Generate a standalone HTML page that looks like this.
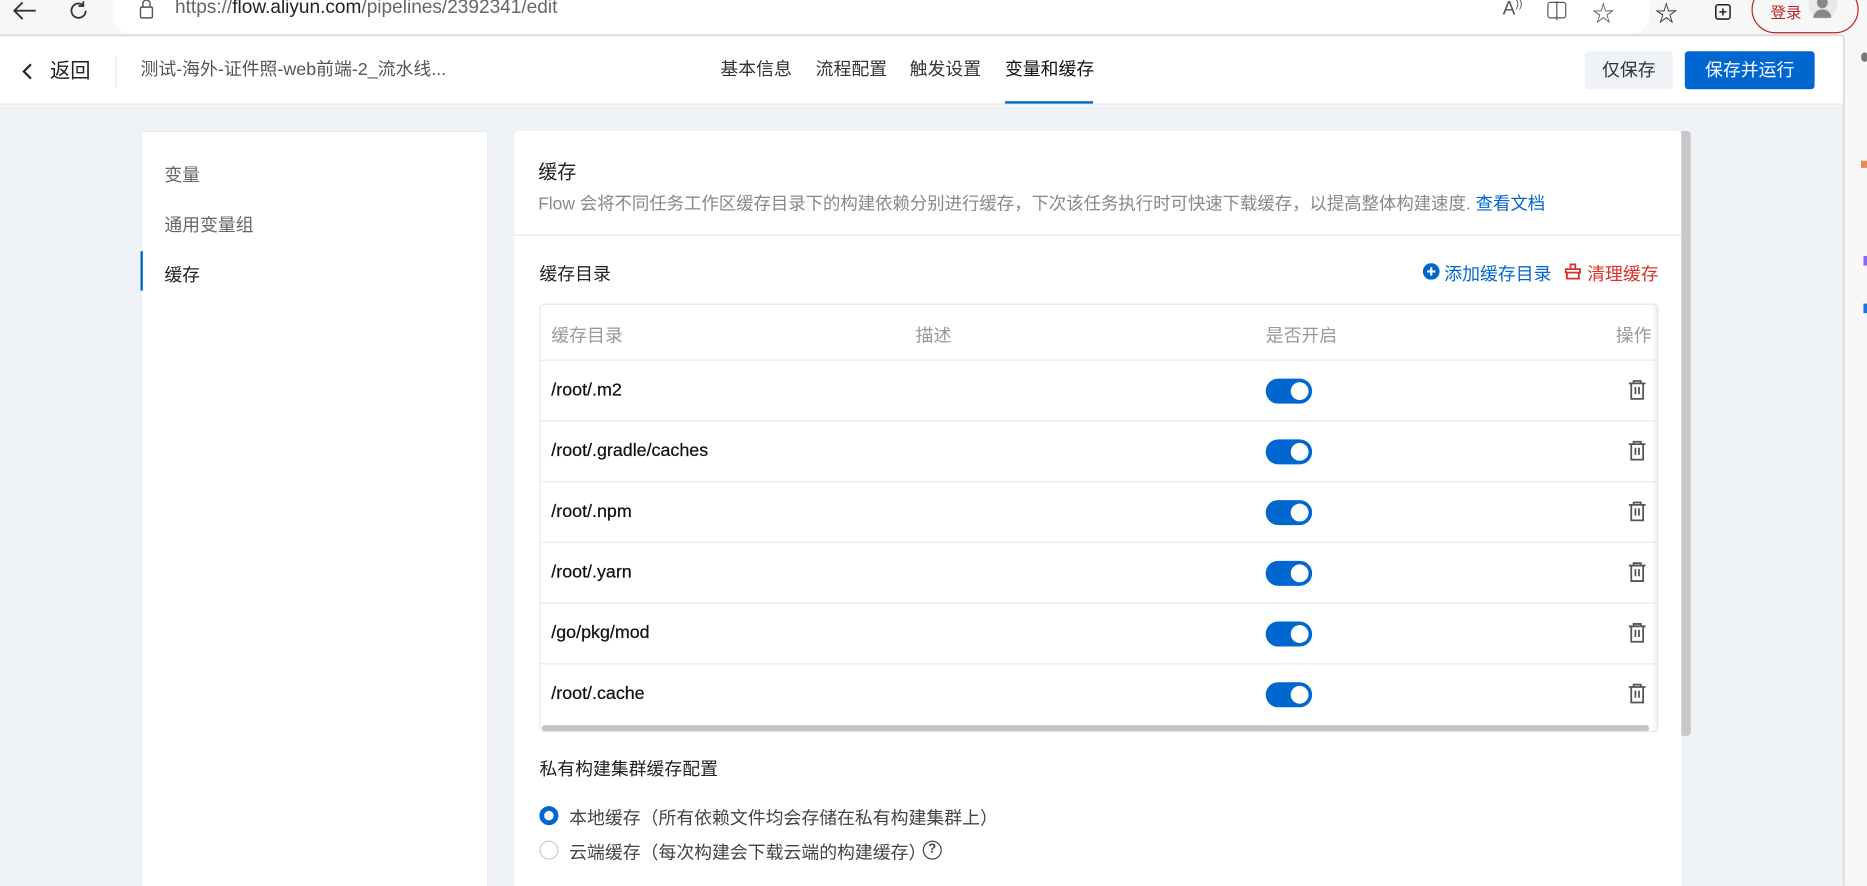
<!DOCTYPE html>
<html><head><meta charset="utf-8">
<style>
*{box-sizing:border-box;margin:0;padding:0}
html,body{width:1867px;height:886px;overflow:hidden;background:#f7f7f7}
#w{width:1568px;height:744px;transform:scale(1.19069);transform-origin:0 0;position:relative;font-family:"Liberation Sans","Noto Sans CJK SC",sans-serif;color:#333}
.a{position:absolute}
.t{white-space:nowrap}
.row{position:absolute;left:0;right:0;height:51px;border-top:1px solid #e8e8e8}
.row .p{position:absolute;left:9px;top:16px;font-size:15px;color:#111;-webkit-text-stroke:0.2px #111}
.tg{position:absolute;left:609px;top:15px;width:39px;height:21px;border-radius:11px;background:#0067d1}
.tg:after{content:"";position:absolute;right:3px;top:3px;width:15px;height:15px;border-radius:50%;background:#fff}
.tr{position:absolute;left:913px;top:16px}
</style></head><body><div id="w">
<div class="a" style="left:0;top:0;width:1548px;height:30px;background:#f7f7f7;border-bottom:1px solid #d0d0d0"></div>
<svg class="a" style="left:10px;top:0" width="22" height="18" viewBox="0 0 22 18"><path d="M20 9H3M9 2L2 9l7 7" stroke="#333" stroke-width="1.6" fill="none"/></svg>
<svg class="a" style="left:57px;top:0" width="18" height="18" viewBox="0 0 18 18"><path d="M15 9a6 6 0 1 1-2-4.5M13 1v4h-4" stroke="#333" stroke-width="1.5" fill="none"/></svg>
<div class="a" style="left:95px;top:-12px;width:1290px;height:40px;background:#fff;border-radius:14px"></div>
<svg class="a" style="left:116px;top:0" width="14" height="16" viewBox="0 0 14 16"><rect x="2" y="6" width="10" height="9" rx="1" stroke="#555" fill="none" stroke-width="1.2"/><path d="M4 6V3a3 3 0 0 1 6 0v3" stroke="#555" fill="none" stroke-width="1.2"/></svg>
<div class="a t" style="left:147px;top:-2px;font-size:16px;color:#666">https://<span style="color:#222">flow.aliyun.com</span>/pipelines/2392341/edit</div>
<div class="a t" style="left:1262px;top:-2px;font-size:16px;color:#555">A<sup style="font-size:9px">))</sup></div>
<svg class="a" style="left:1299px;top:1px" width="18" height="16"><rect x="1" y="1" width="15" height="13" rx="2" stroke="#555" fill="none"/><path d="M8.5 0v16" stroke="#555"/></svg>
<div class="a t" style="left:1337px;top:-3px;font-size:19px;color:#555">☆</div>
<div class="a t" style="left:1390px;top:-3px;font-size:19px;color:#222">☆</div>
<svg class="a" style="left:1437px;top:1px" width="18" height="16"><rect x="4" y="3" width="12" height="12" rx="2" stroke="#222" fill="none" stroke-width="1.3"/><path d="M10 6v6M7 9h6" stroke="#222" stroke-width="1.3"/></svg>
<div class="a" style="left:1471px;top:-12px;width:90px;height:40px;border:1px solid #b22;border-radius:20px"></div>
<div class="a t" style="left:1487px;top:0px;font-size:13px;color:#b22">登录</div>
<div class="a" style="left:1519px;top:-8px;width:24px;height:24px;border-radius:50%;background:#e8e8e8"></div>
<div class="a" style="left:1526px;top:-3px;width:9px;height:10px;border-radius:50%;background:#888"></div>
<div class="a" style="left:1523px;top:8px;width:15px;height:7px;border-radius:7px 7px 0 0;background:#888"></div>
<div class="a" style="left:1548px;top:30px;width:1px;height:714px;background:#ccc"></div>
<div class="a" style="left:1563px;top:44px;width:6px;height:8px;border-radius:50%;background:#777"></div>
<div class="a" style="left:1563px;top:135px;width:5px;height:6px;background:#e85"></div>
<div class="a" style="left:1565px;top:215px;width:4px;height:8px;background:#86f"></div>
<div class="a" style="left:1565px;top:255px;width:4px;height:8px;background:#17e"></div>
<div class="a" style="left:0;top:31px;width:1548px;height:57px;background:#fff;border-bottom:1px solid #e5e5e5"></div>
<svg class="a" style="left:18px;top:53px" width="10" height="14"><path d="M8 1L2 7l6 6" stroke="#222" stroke-width="1.8" fill="none"/></svg>
<div class="a t" style="left:42px;top:50px;font-size:17px;line-height:20px;color:#222">返回</div>
<div class="a" style="left:97px;top:47px;width:1px;height:26px;background:#e5e5e5"></div>
<div class="a t" style="left:118px;top:50px;font-size:15px;line-height:18px;color:#555">测试-海外-证件照-web前端-2_流水线...</div>
<div class="a t" style="left:605px;top:50px;font-size:15px;line-height:18px;color:#333">基本信息</div>
<div class="a t" style="left:685px;top:50px;font-size:15px;line-height:18px;color:#333">流程配置</div>
<div class="a t" style="left:764px;top:50px;font-size:15px;line-height:18px;color:#333">触发设置</div>
<div class="a t" style="left:844px;top:50px;font-size:15px;line-height:18px;color:#111">变量和缓存</div>
<div class="a" style="left:844px;top:85px;width:74px;height:2px;background:#0067d1"></div>
<div class="a t" style="left:1331px;top:43px;width:74px;height:32px;background:#eff3f7;border-radius:3px;font-size:15px;color:#333;text-align:center;line-height:34px">仅保存</div>
<div class="a t" style="left:1415px;top:43px;width:109px;height:32px;background:#0067d1;border-radius:3px;font-size:15px;color:#fff;text-align:center;line-height:34px">保存并运行</div>
<div class="a" style="left:0;top:89px;width:1548px;height:655px;background:#eff3f7"></div>
<div class="a" style="left:118px;top:110px;width:292px;height:640px;background:#fff;border-radius:3px;border:1px solid #e8ecf0"></div>
<div class="a t" style="left:138px;top:136px;font-size:15px;color:#666">变量</div>
<div class="a t" style="left:138px;top:178px;font-size:15px;color:#666">通用变量组</div>
<div class="a t" style="left:138px;top:220px;font-size:15px;color:#222">缓存</div>
<div class="a" style="left:118px;top:211px;width:2px;height:33px;background:#0067d1"></div>
<div class="a" style="left:432px;top:110px;width:980px;height:640px;background:#fff;border-radius:3px"></div>
<div class="a" style="left:1412px;top:110px;width:8px;height:508px;background:#c8c8c8;border-radius:0 3px 3px 0"></div>
<div class="a t" style="left:452px;top:131px;font-size:16px;color:#222">缓存</div>
<div class="a t" style="left:452px;top:160px;font-size:14.6px;color:#888">Flow 会将不同任务工作区缓存目录下的构建依赖分别进行缓存，下次该任务执行时可快速下载缓存，以提高整体构建速度. <span style="color:#0067d1">查看文档</span></div>
<div class="a" style="left:432px;top:197px;width:980px;height:1px;background:#e8e8e8"></div>
<div class="a t" style="left:453px;top:219px;font-size:15px;color:#222">缓存目录</div>
<svg class="a" style="left:1195px;top:221px" width="14" height="14"><circle cx="7" cy="7" r="7" fill="#0067d1"/><path d="M7 3.5v7M3.5 7h7" stroke="#fff" stroke-width="1.8"/></svg>
<div class="a t" style="left:1213px;top:219px;font-size:15px;color:#0067d1">添加缓存目录</div>
<svg class="a" style="left:1314px;top:221px" width="14" height="14"><path d="M5 1h4v4H5zM1 5h12v3H1zM2 8h10v5H2z" stroke="#d9302a" stroke-width="1.5" fill="none"/></svg>
<div class="a t" style="left:1333px;top:219px;font-size:15px;color:#d9302a">清理缓存</div>
<div class="a" style="left:453px;top:255px;width:940px;height:360px;border:1px solid #e8e8e8;border-radius:4px;box-shadow:-6px 0 6px -6px rgba(0,0,0,.15) inset">
  <div class="a t" style="left:9px;top:15px;font-size:15px;color:#999">缓存目录</div>
  <div class="a t" style="left:315px;top:15px;font-size:15px;color:#999">描述</div>
  <div class="a t" style="left:609px;top:15px;font-size:15px;color:#999">是否开启</div>
  <div class="a t" style="left:903px;top:15px;font-size:15px;color:#999">操作</div>
  <div class="row" style="top:46px"><div class="p">/root/.m2</div><div class="tg"></div><svg class="tr" width="16" height="17" viewBox="0 0 16 17"><path d="M1 3h14M5 3V1h6v2M3 3v13h10V3M6.5 6v6M9.5 6v6" stroke="#555" stroke-width="1.5" fill="none"/></svg></div>
  <div class="row" style="top:97px"><div class="p">/root/.gradle/caches</div><div class="tg"></div><svg class="tr" width="16" height="17" viewBox="0 0 16 17"><path d="M1 3h14M5 3V1h6v2M3 3v13h10V3M6.5 6v6M9.5 6v6" stroke="#555" stroke-width="1.5" fill="none"/></svg></div>
  <div class="row" style="top:148px"><div class="p">/root/.npm</div><div class="tg"></div><svg class="tr" width="16" height="17" viewBox="0 0 16 17"><path d="M1 3h14M5 3V1h6v2M3 3v13h10V3M6.5 6v6M9.5 6v6" stroke="#555" stroke-width="1.5" fill="none"/></svg></div>
  <div class="row" style="top:199px"><div class="p">/root/.yarn</div><div class="tg"></div><svg class="tr" width="16" height="17" viewBox="0 0 16 17"><path d="M1 3h14M5 3V1h6v2M3 3v13h10V3M6.5 6v6M9.5 6v6" stroke="#555" stroke-width="1.5" fill="none"/></svg></div>
  <div class="row" style="top:250px"><div class="p">/go/pkg/mod</div><div class="tg"></div><svg class="tr" width="16" height="17" viewBox="0 0 16 17"><path d="M1 3h14M5 3V1h6v2M3 3v13h10V3M6.5 6v6M9.5 6v6" stroke="#555" stroke-width="1.5" fill="none"/></svg></div>
  <div class="row" style="top:301px"><div class="p">/root/.cache</div><div class="tg"></div><svg class="tr" width="16" height="17" viewBox="0 0 16 17"><path d="M1 3h14M5 3V1h6v2M3 3v13h10V3M6.5 6v6M9.5 6v6" stroke="#555" stroke-width="1.5" fill="none"/></svg></div>
  <div class="a" style="left:1px;top:353px;width:930px;height:5px;background:#c4c4c4;border-radius:3px"></div>
</div>
<div class="a t" style="left:453px;top:635px;font-size:15px;color:#222">私有构建集群缓存配置</div>
<div class="a" style="left:453px;top:677px;width:16px;height:16px;border-radius:50%;border:4.5px solid #0067d1;background:#fff"></div>
<div class="a t" style="left:478px;top:676px;font-size:15px;color:#444">本地缓存（所有依赖文件均会存储在私有构建集群上）</div>
<div class="a" style="left:453px;top:706px;width:16px;height:16px;border-radius:50%;border:1px solid #ccc;background:#fff"></div>
<div class="a t" style="left:478px;top:705px;font-size:15px;color:#444">云端缓存（每次构建会下载云端的构建缓存）</div>
<div class="a" style="left:775px;top:706px;width:16px;height:16px;border-radius:50%;border:1.5px solid #444;font-size:11px;font-weight:bold;color:#444;text-align:center;line-height:13px">?</div>
</div></body></html>
